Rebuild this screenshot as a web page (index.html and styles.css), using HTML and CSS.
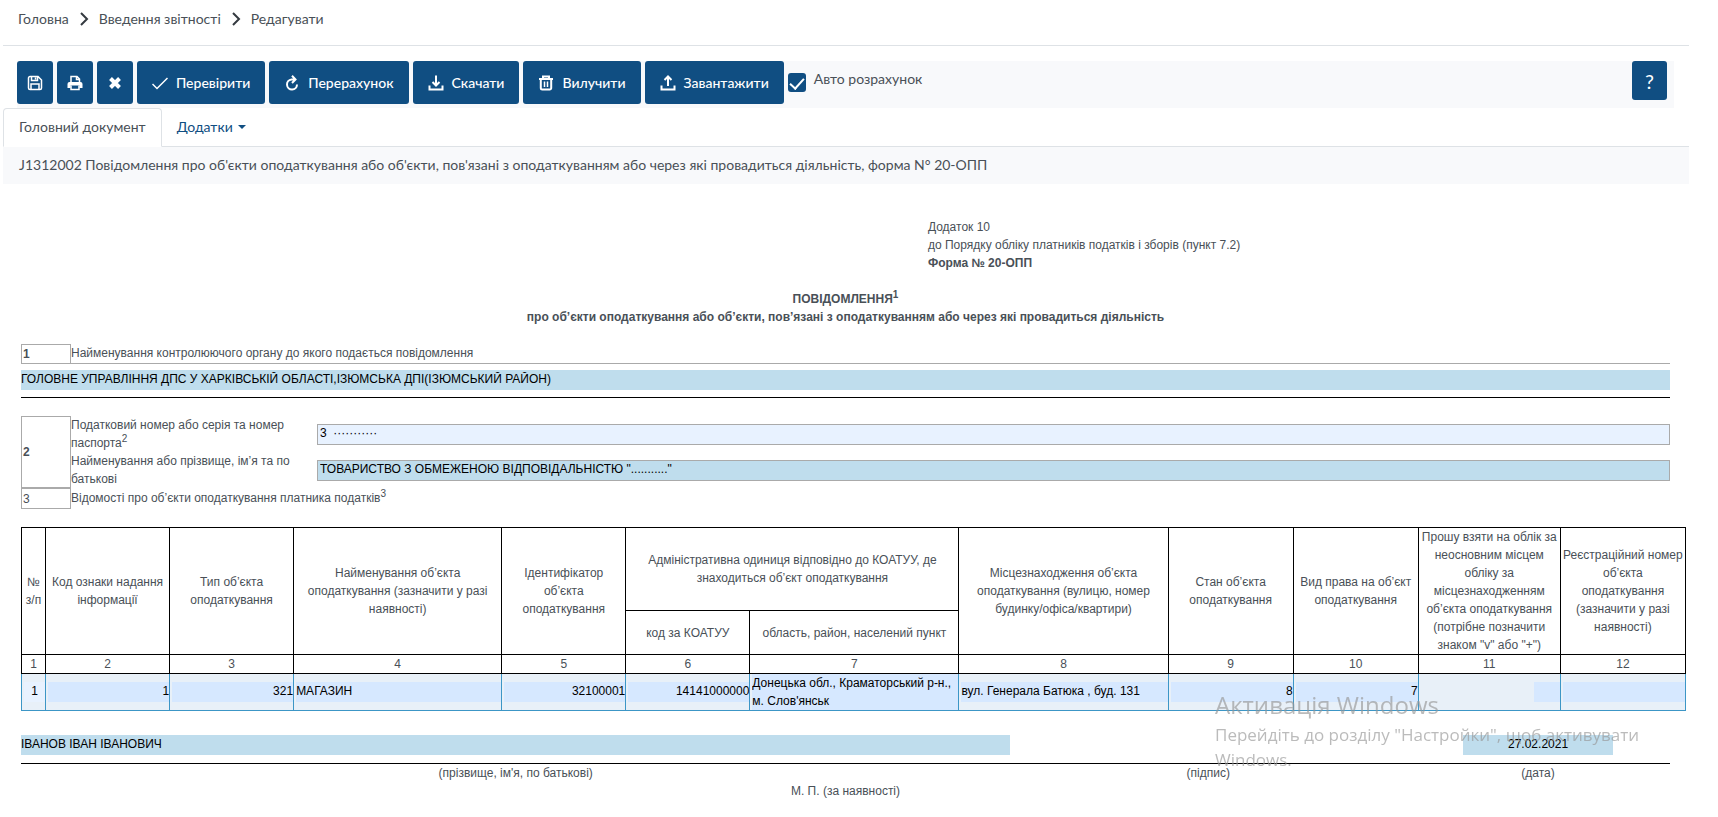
FILE: index.html
```html
<!DOCTYPE html>
<html lang="uk">
<head>
<meta charset="utf-8">
<meta name="viewport" content="width=device-width, initial-scale=1">
<title>Редагувати</title>
<link rel="stylesheet" href="styles.css">
</head>
<body>
<nav class="breadcrumb" aria-label="Навігація">
  <a href="#">Головна</a>
  <svg class="chevron" viewBox="0 0 10 14" aria-hidden="true"><path d="M2 1l6 6-6 6"/></svg>
  <a href="#">Введення звітності</a>
  <svg class="chevron" viewBox="0 0 10 14" aria-hidden="true"><path d="M2 1l6 6-6 6"/></svg>
  <a href="#">Редагувати</a>
</nav>

<div class="toolbar">
  <button class="btn btn-icon" type="button" aria-label="Зберегти">
    <svg class="icon" viewBox="0 0 16 16"><path d="M1.500 3a1.500 1.500 0 0 1 1.500-1.500h8L14.500 5v8a1.500 1.500 0 0 1-1.500 1.500H3A1.500 1.500 0 0 1 1.500 13zM4.500 1.500v4h6v-4M8.500 2.500v2M4 14.500V9h8v5.500"/></svg>
  </button>
  <button class="btn btn-icon" type="button" aria-label="Друкувати">
    <svg class="icon" viewBox="0 0 16 16"><path d="M4 7.500v-6h6l2.500 2.500v3.500M9.500 1.500V4.500h3"/><path class="solid" d="M2.500 7h11A2 2 0 0 1 15.500 9v4h-3v-2.500h-9V13h-3V9a2 2 0 0 1 2-2z"/><path d="M4 10.500v4h8v-4"/></svg>
  </button>
  <button class="btn btn-icon" type="button" aria-label="Закрити">
    <svg class="icon" viewBox="0 0 16 16"><path class="cross" d="M3.500 3.500l9 9M12.500 3.500l-9 9"/></svg>
  </button>
  <button class="btn" type="button">
    <svg class="icon" viewBox="0 0 16 16"><path d="M.500 9l4.500 4.500L15.500 3"/></svg>Перевірити
  </button>
  <button class="btn" type="button">
    <svg class="icon" viewBox="0 0 16 16"><path class="bold" d="M11 4.500H7.500a5 5 0 1 0 5.500 5M8 .800l3.500 3.700L8 8"/></svg>Перерахунок
  </button>
  <button class="btn" type="button">
    <svg class="icon" viewBox="0 0 16 16"><path class="bold" d="M1.500 10.500v4h13v-4M8 .500V10M4.500 7L8 10.500 11.500 7"/></svg>Скачати
  </button>
  <button class="btn" type="button">
    <svg class="icon" viewBox="0 0 16 16"><path class="bold" d="M1 4h14M5 4V1.500h6V4M2.800 4v9a1.500 1.500 0 0 0 1.500 1.500h7.400a1.500 1.500 0 0 0 1.500-1.500V4"/><path d="M6.500 6.500v5.500M9.500 6.500v5.500"/></svg>Вилучити
  </button>
  <button class="btn" type="button">
    <svg class="icon" viewBox="0 0 16 16"><path class="bold" d="M1.500 10.500v4h13v-4M8 11V1.500M4.500 5L8 1.500 11.500 5"/></svg>Завантажити
  </button>
  <input class="check" type="checkbox" id="auto" checked>
  <label class="check-label" for="auto">Авто розрахунок</label>
  <button class="btn btn-help" type="button">?</button>
</div>

<div class="tabs">
  <button class="tab tab-active" type="button">Головний документ</button>
  <button class="tab" type="button">Додатки<span class="caret"></span></button>
</div>
<h1 class="doc-title">J1312002 Повідомлення про об'єкти оподаткування або об'єкти, пов'язані з оподаткуванням або через які провадиться діяльність, форма N° 20-ОПП</h1>

<main class="doc">
  <div class="form">
    <div class="annex">
      <div>Додаток 10</div>
      <div>до Порядку обліку платників податків і зборів (пункт 7.2)</div>
      <div><b>Форма № 20-ОПП</b></div>
    </div>
    <h2 class="heading">ПОВІДОМЛЕННЯ<sup>1</sup><br>про об’єкти оподаткування або об’єкти, пов’язані з оподаткуванням або через які провадиться діяльність</h2>

    <div class="section section-one">
      <div class="num"><b>1</b></div>
      <label for="organ">Найменування контролюючого органу до якого подається повідомлення</label>
    </div>
    <div class="underlined">
      <input class="field" id="organ" value="ГОЛОВНЕ УПРАВЛІННЯ ДПС У ХАРКІВСЬКІЙ ОБЛАСТІ,ІЗЮМСЬКА ДПІ(ІЗЮМСЬКИЙ РАЙОН)">
    </div>

    <div class="section section-two">
      <div class="num"><b>2</b></div>
      <div class="payer">
        <label for="taxno">Податковий номер або серія та номер паспорта<sup>2</sup></label>
        <input class="field boxed pale" id="taxno" value="3  ···········">
        <label for="name">Найменування або прізвище, ім’я та по батькові</label>
        <input class="field boxed" id="name" value="ТОВАРИСТВО З ОБМЕЖЕНОЮ ВІДПОВІДАЛЬНІСТЮ &quot;...........&quot;">
      </div>
    </div>
    <div class="section">
      <div class="num">3</div>
      <div class="info">Відомості про об’єкти оподаткування платника податків<sup>3</sup></div>
    </div>
  </div>

  <table class="objects">
    <colgroup>
      <col class="c-num"><col class="c-code"><col class="c-code"><col class="c-name"><col class="c-code"><col class="c-code"><col class="c-place"><col class="c-place"><col class="c-state"><col class="c-state"><col class="c-mark"><col class="c-state">
    </colgroup>
    <thead>
      <tr class="head-top">
        <th rowspan="2">№ з/п</th>
        <th rowspan="2">Код ознаки надання інформації</th>
        <th rowspan="2">Тип об’єкта оподаткування</th>
        <th rowspan="2">Найменування об’єкта оподаткування (зазначити у разі наявності)</th>
        <th rowspan="2">Ідентифікатор об’єкта оподаткування</th>
        <th colspan="2">Адміністративна одиниця відповідно до КОАТУУ, де знаходиться об’єкт оподаткування</th>
        <th rowspan="2">Місцезнаходження об’єкта оподаткування (вулицю, номер будинку/офіса/квартири)</th>
        <th rowspan="2">Стан об’єкта оподаткування</th>
        <th rowspan="2">Вид права на об’єкт оподаткування</th>
        <th rowspan="2">Прошу взяти на облік за неосновним місцем обліку за місцезнаходженням об’єкта оподаткування (потрібне позначити знаком "v" або "+")</th>
        <th rowspan="2">Реєстраційний номер об’єкта оподаткування (зазначити у разі наявності)</th>
      </tr>
      <tr class="head-sub">
        <th>код за КОАТУУ</th>
        <th>область, район, населений пункт</th>
      </tr>
      <tr class="head-num">
        <th>1</th><th>2</th><th>3</th><th>4</th><th>5</th><th>6</th><th>7</th><th>8</th><th>9</th><th>10</th><th>11</th><th>12</th>
      </tr>
    </thead>
    <tbody>
      <tr>
        <td><input class="cell center pale" aria-label="№ з/п" value="1"></td>
        <td><input class="cell right" aria-label="Код ознаки" value="1"></td>
        <td><input class="cell right" aria-label="Тип об’єкта" value="321"></td>
        <td><input class="cell" aria-label="Найменування об’єкта" value="МАГАЗИН"></td>
        <td><input class="cell right" aria-label="Ідентифікатор" value="32100001"></td>
        <td><input class="cell right" aria-label="Код за КОАТУУ" value="14141000000"></td>
        <td><textarea class="cell" rows="2" aria-label="Область, район, населений пункт">Донецька обл., Краматорський р-н., м. Слов'янськ</textarea></td>
        <td><input class="cell" aria-label="Місцезнаходження" value="вул. Генерала Батюка , буд. 131"></td>
        <td><input class="cell right" aria-label="Стан об’єкта" value="8"></td>
        <td><input class="cell right" aria-label="Вид права" value="7"></td>
        <td><input class="cell short" aria-label="Неосновне місце обліку" value=""></td>
        <td><input class="cell" aria-label="Реєстраційний номер" value=""></td>
      </tr>
    </tbody>
  </table>

  <div class="form">
    <div class="signature">
      <input class="field" aria-label="Прізвище, ім'я, по батькові" value="ІВАНОВ ІВАН ІВАНОВИЧ">
      <span></span>
      <input class="field date" aria-label="Дата" value="27.02.2021">
    </div>
    <div class="captions">
      <span>(прізвище, ім'я, по батькові)</span>
      <span>(підпис)</span>
      <span>(дата)</span>
    </div>
    <div class="stamp">М. П. (за наявності)</div>
  </div>
</main>

<aside class="watermark">
  <div class="watermark-title">Активація Windows</div>
  <div>Перейдіть до розділу "Настройки", щоб активувати Windows.</div>
</aside>
</body>
</html>
```
FILE: styles.css
```css
* { box-sizing: border-box; }

body {
  margin: 0;
  padding: 0 29px 0 3px;
  background: #fff;
  color: #495057;
  font: 14px/20px Lato, "Open Sans", sans-serif;
}

button, input, textarea { font: inherit; color: inherit; }

.breadcrumb {
  display: flex;
  align-items: center;
  gap: 10px;
  height: 46px;
  padding: 0 15px 8px;
  border-bottom: 1px solid #dee2e6;
}
.breadcrumb a { color: inherit; text-decoration: none; }
.chevron {
  width: 10px;
  height: 14px;
  fill: none;
  stroke: #343a40;
  stroke-width: 2;
}

.toolbar {
  display: flex;
  align-items: flex-start;
  gap: 4px;
  height: 47px;
  margin: 15px 15px 0 14px;
  padding-right: 7px;
  background: #f8f9fb;
}
.btn {
  display: flex;
  align-items: center;
  justify-content: center;
  gap: 8px;
  height: 43px;
  padding: 0 15px;
  border: 0;
  border-radius: 3px;
  background: #104e82;
  color: #fff;
  font-weight: 500;
}
.btn-icon { width: 36px; padding: 0; }
.btn-help {
  width: 35px;
  height: 39px;
  margin-left: auto;
  padding: 0;
  font-size: 20px;
  font-weight: 400;
}
.icon {
  width: 16px;
  height: 16px;
  fill: none;
  stroke: currentColor;
  stroke-width: 1.5;
}
.icon .bold { stroke-width: 2; }
.icon .cross { stroke-width: 4; }
.icon .solid { fill: currentColor; stroke: none; }

.check {
  appearance: none;
  width: 18px;
  height: 19px;
  margin: 12px 0 0;
  border-radius: 3px;
  background: #104e82;
}
.check:checked::after {
  content: "";
  display: block;
  width: 6px;
  height: 12px;
  margin: 2px auto 0;
  border: solid #fff;
  border-width: 0 2px 2px 0;
  transform: rotate(42deg);
}
.check-label { margin: 8px 0 0 4px; }

.tabs {
  display: flex;
  height: 39px;
  border-bottom: 1px solid #dee2e6;
}
.tab {
  display: flex;
  align-items: center;
  gap: 5px;
  height: 39px;
  padding: 0 15px 2px;
  border: 0;
  background: none;
  color: #104e82;
}
.tab-active {
  border: 1px solid #dee2e6;
  border-bottom-color: #fff;
  border-radius: 4px 4px 0 0;
  background: #fff;
  color: #495057;
}
.caret {
  border: 4px solid transparent;
  border-top-color: currentColor;
  border-bottom: 0;
}
.doc-title {
  margin: 0;
  padding: 8px 16px 9px;
  background: #f8f9fb;
  font-size: 14px;
  font-weight: 400;
}

.doc {
  padding: 34px 3px 0 18px;
  font: 12px/18px "Liberation Sans", Arial, sans-serif;
}
.form { margin-right: 16px; }
sup { font-size: 10px; line-height: 0; }
.annex { margin-left: 55%; }
.heading {
  margin: 18px 0;
  font-size: 12px;
  text-align: center;
}

.section { display: flex; }
.section > .num {
  display: flex;
  align-items: center;
  width: 50px;
  min-height: 21px;
  padding-left: 1px;
  border: 1px solid #aaa;
}
.section-one { border-bottom: 1px solid #aaa; }
.section-one > .num { border-bottom: 0; height: 19px; min-height: 0; }
.section-two { margin-top: 18px; }
.info { padding-top: 1px; }
.payer {
  display: grid;
  grid-template-columns: 246px 1fr;
  align-items: center;
  flex: 1;
}
.payer label { padding-right: 20px; }
.underlined {
  padding: 6px 0 7px;
  border-bottom: 1px solid #000;
}

.field {
  display: block;
  width: 100%;
  height: 20px;
  padding: 0 0 2px;
  border: 0;
  border-radius: 0;
  background: #bfdded;
  color: #000;
}
.field.boxed {
  height: 21px;
  padding: 0 2px 2px;
  border: 1px solid #aaa;
}
.field.pale { background: #e8f2ff; }

.objects {
  width: 100%;
  margin-top: 18px;
  table-layout: fixed;
  border-collapse: collapse;
}
.c-num { width: 24px; }
.c-code { width: 124px; }
.c-name { width: 208px; }
.c-place { width: 209px; }
.c-state { width: 125px; }
.c-mark { width: 142px; }
.objects th {
  padding: 0 1px;
  border: 1px solid #000;
  font-weight: 400;
}
.head-top { height: 83px; }
.head-sub { height: 44px; }
.head-num { height: 19px; }
.objects td {
  padding: 0 0 0 2px;
  border: 1px solid #3c96c6;
  border-top-color: #000;
  background: #e8f0f8;
}
.cell {
  display: block;
  width: 100%;
  height: 20px;
  padding: 0 0 2px;
  border: 0;
  border-radius: 0;
  background: #d6e8ff;
  color: #000;
  resize: none;
  overflow: hidden;
}
textarea.cell { height: 36px; padding: 0; }
.cell.center { text-align: center; }
.cell.right { text-align: right; }
.cell.pale { background: #e8f2ff; }
.cell.short { width: 26px; margin-left: auto; }

.signature, .captions {
  display: grid;
  grid-template-columns: 60% 24% 16%;
}
.signature {
  margin-top: 24px;
  padding-bottom: 8px;
  border-bottom: 1px solid #000;
}
.field.date { width: 150px; margin: 0 auto; text-align: center; }
.captions, .stamp { text-align: center; }

.watermark {
  position: fixed;
  right: 29px;
  bottom: 45px;
  width: 474px;
  color: rgba(150, 150, 150, 0.65);
  font: 17px/25px "Open Sans", "Noto Sans", sans-serif;
  pointer-events: none;
}
.watermark-title { font-size: 24px; line-height: 34px; }
```
